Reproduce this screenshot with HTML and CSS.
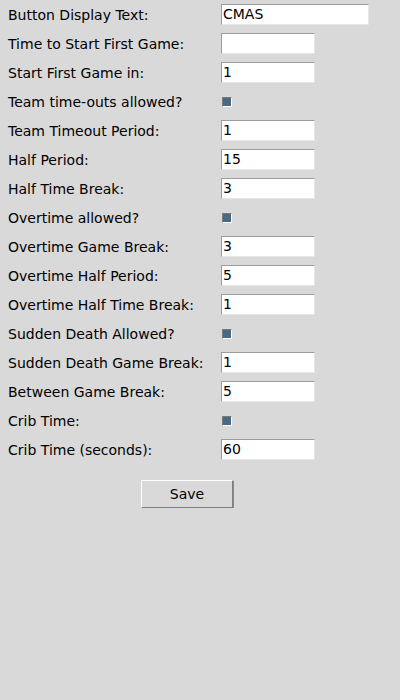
FILE: index.html
```html
<!DOCTYPE html>
<html>
<head>
<meta charset="utf-8">
<link rel="stylesheet" href="styles.css">
</head>
<body>
<div class="form">
  <div class="row"><span class="label">Button Display Text:</span><span class="entry wide">CMAS</span></div>
  <div class="row"><span class="label">Time to Start First Game:</span><span class="entry"></span></div>
  <div class="row"><span class="label">Start First Game in:</span><span class="entry">1</span></div>
  <div class="row"><span class="label">Team time-outs allowed?</span><span class="check"></span></div>
  <div class="row"><span class="label">Team Timeout Period:</span><span class="entry">1</span></div>
  <div class="row"><span class="label">Half Period:</span><span class="entry">15</span></div>
  <div class="row"><span class="label">Half Time Break:</span><span class="entry">3</span></div>
  <div class="row"><span class="label">Overtime allowed?</span><span class="check"></span></div>
  <div class="row"><span class="label">Overtime Game Break:</span><span class="entry">3</span></div>
  <div class="row"><span class="label">Overtime Half Period:</span><span class="entry">5</span></div>
  <div class="row"><span class="label">Overtime Half Time Break:</span><span class="entry">1</span></div>
  <div class="row"><span class="label">Sudden Death Allowed?</span><span class="check"></span></div>
  <div class="row"><span class="label">Sudden Death Game Break:</span><span class="entry">1</span></div>
  <div class="row"><span class="label">Between Game Break:</span><span class="entry">5</span></div>
  <div class="row"><span class="label">Crib Time:</span><span class="check"></span></div>
  <div class="row"><span class="label">Crib Time (seconds):</span><span class="entry">60</span></div>
  <div class="actions"><span class="button">Save</span></div>
</div>
</body>
</html>
```
FILE: styles.css
```css
html, body {
  margin: 0;
  padding: 0;
  background: #d9d9d9;
  font-family: "DejaVu Sans", sans-serif;
  font-size: 14px;
  color: #000;
}
.form {
  padding: 4px 0 0 8px;
  display: flex;
  flex-direction: column;
  gap: 8px;
}
.row {
  display: flex;
  align-items: center;
  height: 21px;
}
.label {
  width: 213px;
  flex: none;
  white-space: nowrap;
}
.entry {
  box-sizing: border-box;
  width: 94px;
  height: 21px;
  background: #fff;
  border: 1px solid;
  border-color: #9c9c9c #e6e6e6 #e6e6e6 #9c9c9c;
  padding: 0 0 0 1px;
  line-height: 19px;
  white-space: pre;
}
.entry.wide {
  width: 148px;
}
.check {
  box-sizing: border-box;
  width: 10px;
  height: 10px;
  margin-left: 1px;
  background: #4a6984;
  border: 1px solid;
  border-color: #7a7a7a #fff #fff #7a7a7a;
}
.actions {
  display: flex;
  padding-top: 12px;
  padding-left: 133px;
}
.button {
  box-sizing: border-box;
  width: 92px;
  height: 28px;
  border: 1px solid;
  border-color: #fff #7f7f7f #7f7f7f #fff;
  box-shadow: 1px 1px 0 #8a8a8a;
  display: flex;
  align-items: center;
  justify-content: center;
}
```
